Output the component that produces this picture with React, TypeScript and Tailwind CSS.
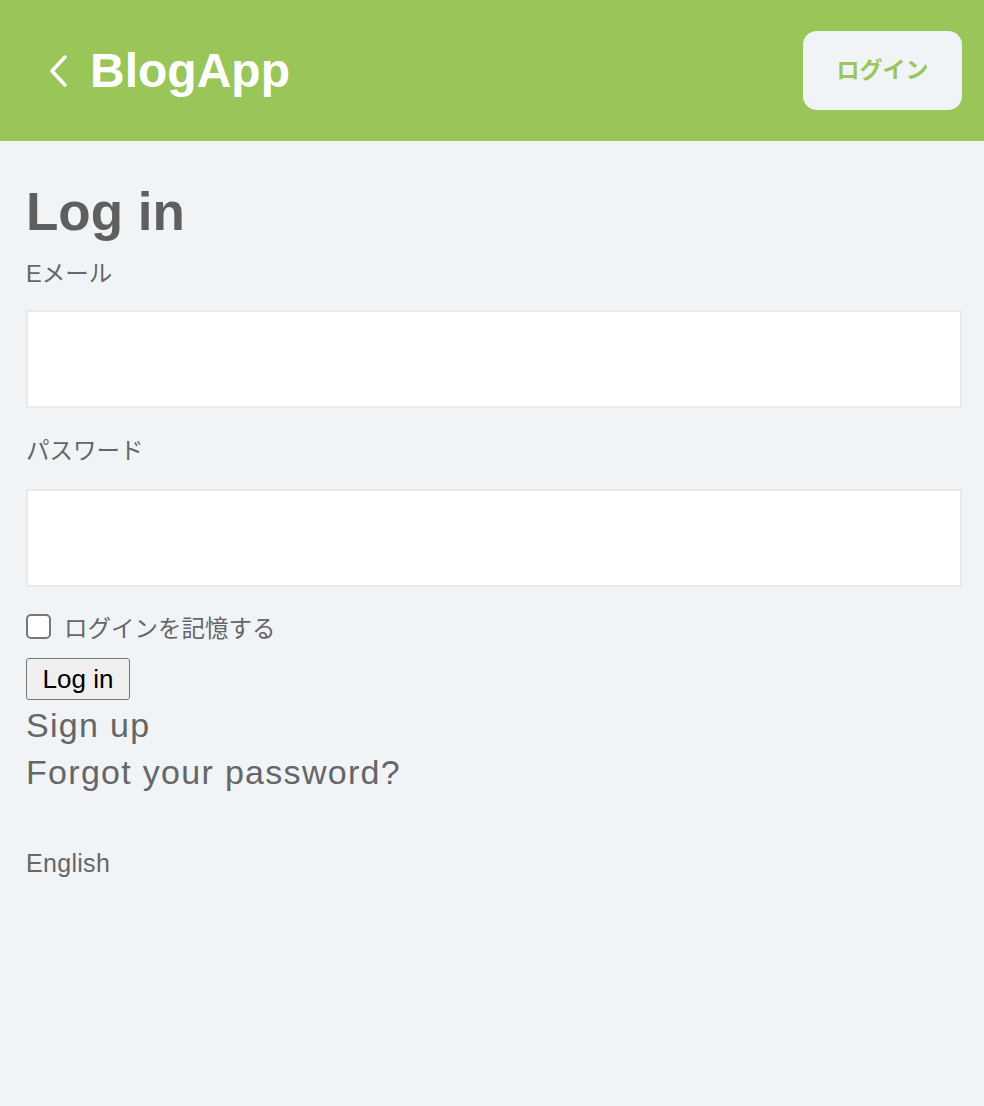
export default function App() {
  const jp = "font-['Liberation_Sans','Noto_Sans_CJK_JP',sans-serif]";

  return (
    <div className={`min-h-[1106px] bg-[#f0f4f7] ${jp}`}>
      {/* Header */}
      <header className="h-[141px] bg-[#9ac558] flex items-center justify-between pl-[48px] pr-[22px]">
        <div className="flex items-center gap-[22px]">
          <svg width="20" height="32" viewBox="0 0 20 32" fill="none">
            <path d="M17 2 L4 16 L17 30" stroke="white" strokeWidth="3.5" strokeLinecap="round" strokeLinejoin="round" />
          </svg>
          <span className="text-white font-bold text-[48px] leading-none">BlogApp</span>
        </div>
        <button className="w-[159px] h-[79px] rounded-[14px] bg-[#f0f4f7] text-[#9ac558] font-bold text-[23px] leading-none">
          ログイン
        </button>
      </header>

      <main className="pl-[26px] pr-[22px] flex flex-col items-start">
        <h1 className="mt-[44px] text-[53px] leading-none font-bold text-[#5f5f5f]">Log in</h1>

        <label className="mt-[24px] text-[23.5px] leading-[24px] text-[#666]">Eメール</label>
        <input type="email" className="mt-[24px] w-full h-[98px] bg-white border-2 border-[#e9e9e9] outline-none" />

        <label className="mt-[31px] text-[23.5px] leading-[24px] text-[#666]">パスワード</label>
        <input type="password" className="mt-[26px] w-full h-[98px] bg-white border-2 border-[#e9e9e9] outline-none" />

        <div className="mt-[27px] flex items-center gap-[13px] h-[25px]">
          <input type="checkbox" className="appearance-none w-[25px] h-[25px] bg-white border-2 border-[#777] rounded-[5px]" />
          <span className="mt-[6px] text-[23.5px] leading-none text-[#666]">ログインを記憶する</span>
        </div>

        <button className="mt-[19px] w-[104px] h-[42px] bg-[#efefef] border border-[#767676] rounded-[3px] text-black text-[26px] leading-none">
          Log in
        </button>

        <a className="mt-[8px] text-[34px] leading-none tracking-[1.3px] text-[#666]">Sign up</a>
        <a className="mt-[13px] text-[34px] leading-none tracking-[1.3px] text-[#666]">Forgot your password?</a>

        <div className="mt-[62px] text-[25px] leading-none tracking-[0.3px] text-[#666]">English</div>
      </main>
    </div>
  );
}
